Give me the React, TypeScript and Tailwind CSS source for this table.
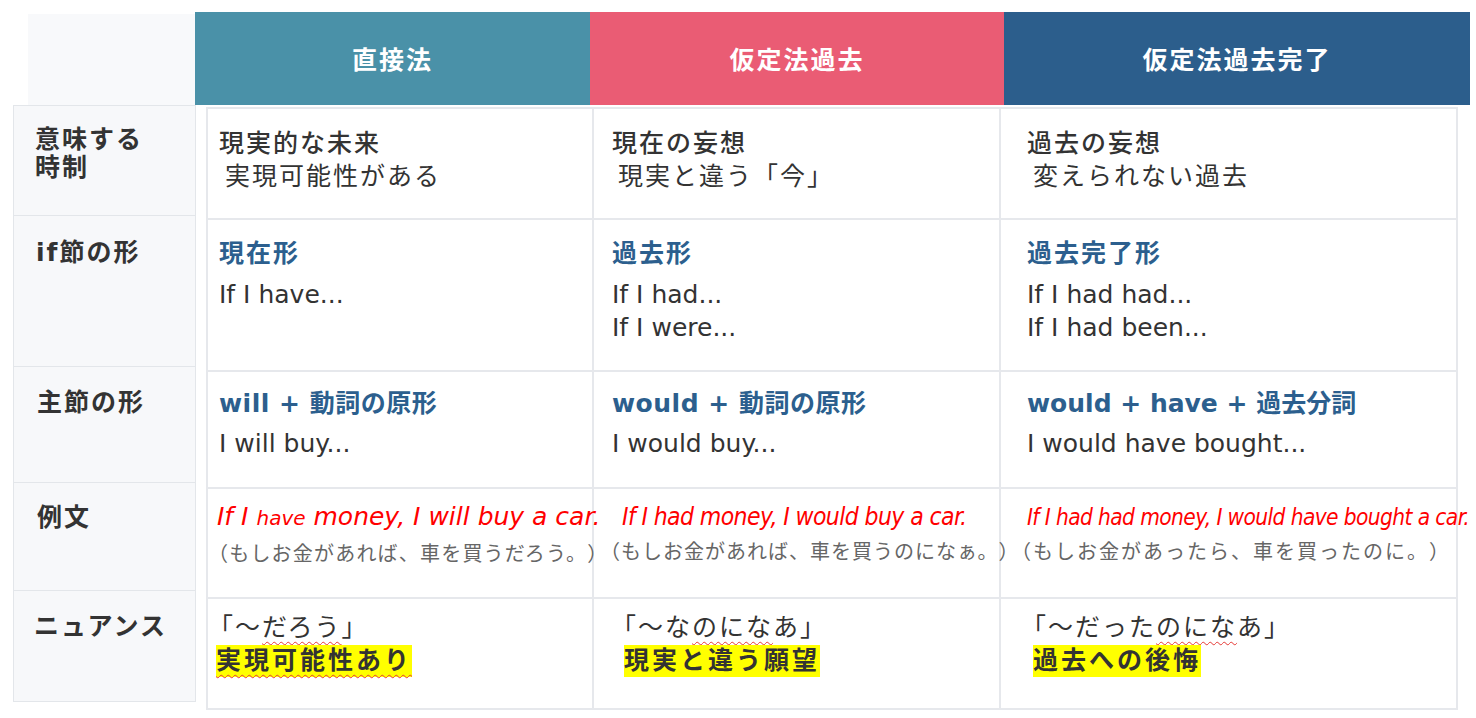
import React from 'react';

const Sq: React.FC<{ children: React.ReactNode }> = ({ children }) => (
  <span className="underline decoration-wavy decoration-[#e53935] decoration-1 underline-offset-[5px]">{children}</span>
);

const Cell: React.FC<{ className?: string; children?: React.ReactNode }> = ({ className = '', children }) => (
  <div className={`border-[#e6e8ec] whitespace-nowrap ${className}`}>{children}</div>
);

const Mark: React.FC<{ children: React.ReactNode }> = ({ children }) => (
  <div className="inline-block h-[32px] leading-[32px] bg-[#ffff00] font-bold tracking-[3px]">{children}</div>
);

const App: React.FC = () => {
  return (
    <div className="w-[1476px] h-[718px] bg-white overflow-hidden font-['DejaVu_Sans','Noto_Sans_CJK_JP',sans-serif] text-[#333] [text-spacing-trim:space-all]">
      {/* header row */}
      <div className="flex items-end pt-[12px] pl-[28px] text-white text-[25px] font-bold tracking-[2px]">
        <div className="w-[167px] h-[91px] bg-[#f8f9fb]" />
        <div className="w-[395px] h-[93px] pt-[4px] flex items-center justify-center bg-[#4a91a8]">直接法</div>
        <div className="w-[414px] h-[93px] pt-[4px] flex items-center justify-center bg-[#ea5c74]">仮定法過去</div>
        <div className="w-[466px] h-[93px] pt-[4px] flex items-center justify-center bg-[#2c5e8c]">仮定法過去完了</div>
      </div>

      <div className="flex items-start pl-[13px]">
        {/* row labels */}
        <div className="w-[183px] flex flex-col border border-[#e3e6ea] bg-[#f7f8fa] text-[25px] font-bold tracking-[2px] leading-[28px]">
          <div className="h-[110px] border-b border-[#e3e6ea] pl-[21px] pt-[20px]">意味する<br />時制</div>
          <div className="h-[151px] border-b border-[#e3e6ea] pl-[22px] pt-[23px]">if節の形</div>
          <div className="h-[116px] border-b border-[#e3e6ea] pl-[23px] pt-[22px]">主節の形</div>
          <div className="h-[108px] border-b border-[#e3e6ea] pl-[23px] pt-[21px]">例文</div>
          <div className="h-[110px] pl-[20px] pt-[22px]">ニュアンス</div>
        </div>

        {/* table body */}
        <div className="ml-[10px] mt-[2px] w-[1252px] grid grid-cols-[386px_407px_455px] grid-rows-[111px_152px_117px_110px_109px] border-2 border-[#e6e8ec] text-[25px] leading-[33px]">
          {/* 意味する時制 */}
          <Cell className="border-r-2 border-b-2 pl-[11px] pt-[18px] tracking-[2px]">
            <div className="font-medium">現実的な未来</div>
            <div className="ml-[6px]">実現可能性がある</div>
          </Cell>
          <Cell className="border-r-2 border-b-2 pl-[18px] pt-[18px] tracking-[2px]">
            <div className="font-medium">現在の妄想</div>
            <div className="ml-[6px]">現実と違う「今」</div>
          </Cell>
          <Cell className="border-b-2 pl-[26px] pt-[18px] tracking-[2px]">
            <div className="font-medium">過去の妄想</div>
            <div className="ml-[6px]">変えられない過去</div>
          </Cell>

          {/* if節の形 */}
          <Cell className="border-r-2 border-b-2 pl-[11px] pt-[17px]">
            <div className="font-bold text-[#2c5f8e] tracking-[2px] mb-[8px]">現在形</div>
            <div>If I have...</div>
          </Cell>
          <Cell className="border-r-2 border-b-2 pl-[18px] pt-[17px]">
            <div className="font-bold text-[#2c5f8e] tracking-[2px] mb-[8px]">過去形</div>
            <div>If I had...</div>
            <div>If I were...</div>
          </Cell>
          <Cell className="border-b-2 pl-[26px] pt-[17px]">
            <div className="font-bold text-[#2c5f8e] tracking-[2px] mb-[8px]">過去完了形</div>
            <div>If I had had...</div>
            <div>If I had been...</div>
          </Cell>

          {/* 主節の形 */}
          <Cell className="border-r-2 border-b-2 pl-[11px] pt-[15px]">
            <div className="font-bold text-[#2c5f8e] tracking-[0.5px] mb-[7px]">will + 動詞の原形</div>
            <div>I will buy...</div>
          </Cell>
          <Cell className="border-r-2 border-b-2 pl-[18px] pt-[15px]">
            <div className="font-bold text-[#2c5f8e] tracking-[0.5px] mb-[7px]">would + 動詞の原形</div>
            <div>I would buy...</div>
          </Cell>
          <Cell className="border-b-2 pl-[26px] pt-[15px]">
            <div className="font-bold text-[#2c5f8e] tracking-[0px] mb-[7px]">would + have + 過去分詞</div>
            <div>I would have bought...</div>
          </Cell>

          {/* 例文 */}
          <Cell className="border-r-2 border-b-2 pl-[11px] pt-[11px]">
            <div className="italic text-[#ff0000] text-[25px] -ml-[2px]">
              If I <span className="text-[20px]">have</span> money, I will buy a car.
            </div>
            <div className="-ml-[11px] text-[20px] tracking-[1.2px] leading-[38px] text-[#666]">（もしお金があれば、車を買うだろう。）</div>
          </Cell>
          <Cell className="border-r-2 border-b-2 pl-[18px] pt-[11px]">
            <div className="italic text-[#ff0000] text-[24.5px] ml-[10px] font-['DejaVu_Sans_Condensed','DejaVu_Sans',sans-serif] font-stretch-condensed tracking-[-0.6px]">
              If I had money, I would buy a car.
            </div>
            <div className="-ml-[12px] text-[20px] tracking-[1px] leading-[38px] text-[#666]">（もしお金があれば、車を買うのになぁ。）</div>
          </Cell>
          <Cell className="border-b-2 pl-[26px] pt-[12px]">
            <div className="italic text-[#ff0000] text-[22.5px] font-['DejaVu_Sans_Condensed','DejaVu_Sans',sans-serif] font-stretch-condensed tracking-[-0.6px]">
              If I had had money, I would have bought a car.
            </div>
            <div className="-ml-[16px] text-[20px] tracking-[2px] leading-[37px] text-[#666]">（もしお金があったら、車を買ったのに。）</div>
          </Cell>

          {/* ニュアンス */}
          <Cell className="border-r-2 pl-[8px] pt-[12px] tracking-[2px]">
            <div className="-ml-[8px]">「～<Sq>だろう</Sq>」</div>
            <Mark><Sq>実現可能性あり</Sq></Mark>
          </Cell>
          <Cell className="border-r-2 pl-[30px] pt-[12px] tracking-[2px]">
            <div className="-ml-[13px]">「～な<Sq>のにな</Sq>あ」</div>
            <Mark>現実と違う願望</Mark>
          </Cell>
          <Cell className="pl-[32px] pt-[12px] tracking-[2px]">
            <div className="-ml-[12px]">「～だった<Sq>のにな</Sq>あ」</div>
            <Mark>過去への後悔</Mark>
          </Cell>
        </div>
      </div>
    </div>
  );
};

export default App;
